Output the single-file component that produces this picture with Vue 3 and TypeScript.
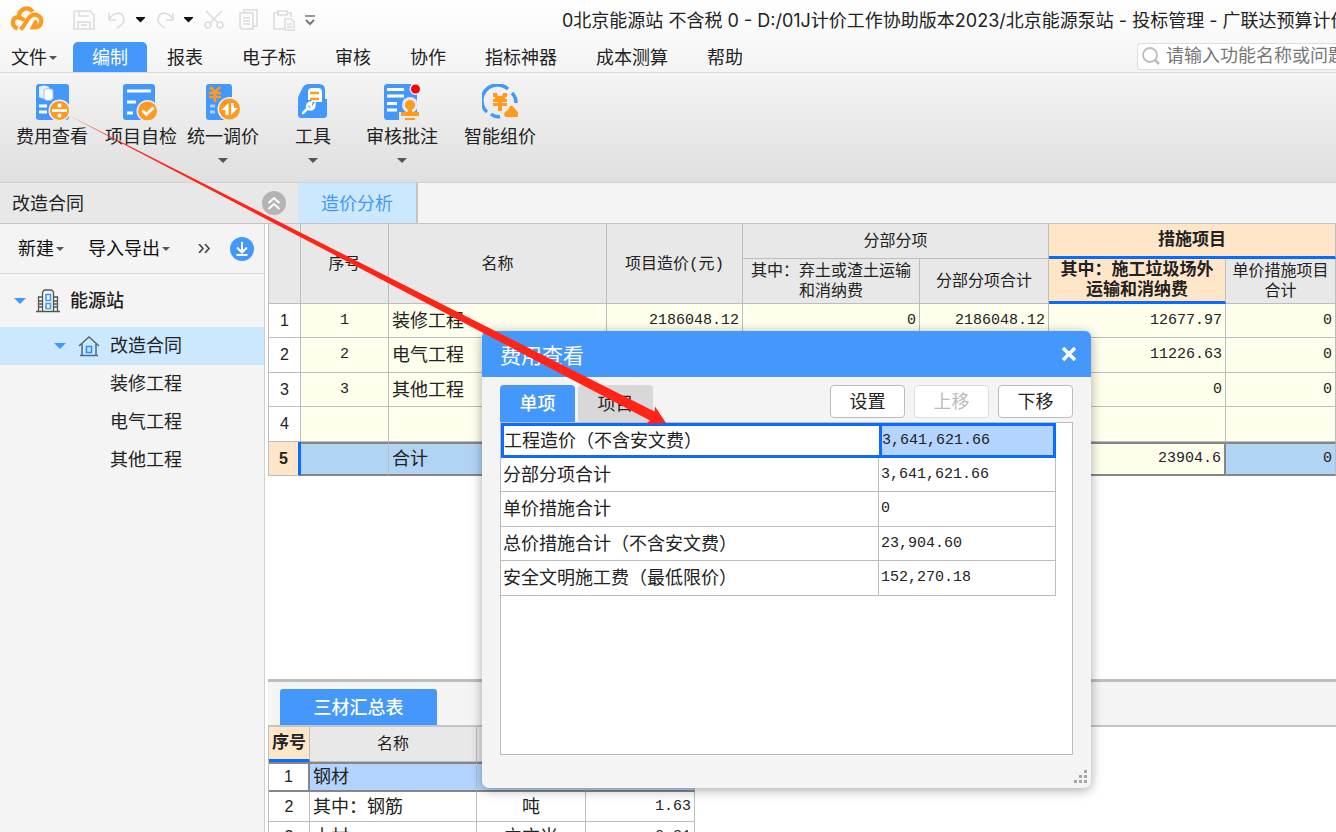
<script setup lang="ts">
import { ref } from 'vue'

interface Tool {
  id: string
  label: string
  menu: boolean
}
interface CostRow {
  no: string
  name: string
  cells: string[]
}

const menus: string[] = ['编制', '报表', '电子标', '审核', '协作', '指标神器', '成本测算', '帮助']
const activeMenu = ref('编制')

const tools: Tool[] = [
  { id: 'fee', label: '费用查看', menu: false },
  { id: 'check', label: '项目自检', menu: false },
  { id: 'adjust', label: '统一调价', menu: true },
  { id: 'tool', label: '工具', menu: true },
  { id: 'review', label: '审核批注', menu: true },
  { id: 'smart', label: '智能组价', menu: false },
]

const leaves: string[] = ['装修工程', '电气工程', '其他工程']

const costRows: CostRow[] = [
  { no: '1', name: '装修工程', cells: ['2186048.12', '0', '2186048.12', '12677.97', '0'] },
  { no: '2', name: '电气工程', cells: ['', '', '', '11226.63', '0'] },
  { no: '3', name: '其他工程', cells: ['', '', '', '0', '0'] },
  { no: '', name: '', cells: ['', '', '', '', ''] },
  { no: '', name: '合计', cells: ['', '', '', '23904.6', '0'] },
]

const materials = [
  { name: '钢材', unit: '', qty: '' },
  { name: '其中：钢筋', unit: '吨', qty: '1.63' },
  { name: '木材', unit: '立方米', qty: '0.31' },
]

const fees = [
  { name: '工程造价（不含安文费）', value: '3,641,621.66' },
  { name: '分部分项合计', value: '3,641,621.66' },
  { name: '单价措施合计', value: '0' },
  { name: '总价措施合计（不含安文费）', value: '23,904.60' },
  { name: '安全文明施工费（最低限价）', value: '152,270.18' },
]
const feeTab = ref('单项')
const selectedFee = ref(0)
const query = ref('')
</script>

<template>
  <div class="app">
    <header class="top">
      <div class="titlebar">
        <svg class="logo" width="34" height="26" viewBox="0 0 34 26" fill="none" stroke="#ff9a1e" stroke-width="4.2" stroke-linecap="butt">
          <path d="M7.6 23.6C1.4 21.4.6 12.8 8.6 11.8 9.4 4 17.4.4 22.6 6.8" />
          <path d="M8 12.600c3 0 4.600 1 6.200 2.800" />
          <path d="M10.600 24.600C14 21 16 16.500 18.800 13c6-7 13.400-1.500 12.400 4.200-.8 4.200-4.200 5.600-8.200 5.200 1.400-2.600 2-4.400 3.800-6.400" />
        </svg>
        <div class="quick">
          <button aria-label="保存"><svg width="22" height="20" viewBox="0 0 22 20" class="ghost"><path d="M2 1h15l4 4v14H1V2zM5 19v-7h12v7M6 1v5h10M8 15h6" /></svg></button>
          <button aria-label="撤销"><svg width="20" height="20" viewBox="0 0 20 20" class="ghost"><path d="M2 3v7h7M2 10C5 3 13 1 16 6c3 6-1 9-6 12" /></svg></button>
          <button aria-label="撤销列表"><svg width="9" height="6" viewBox="0 0 9 6"><path d="M0 0h9v1L4.500 5.500 0 1z" fill="#111" /></svg></button>
          <button aria-label="恢复"><svg width="20" height="20" viewBox="0 0 20 20" class="ghost"><path d="M18 3v7h-7M18 10C15 3 7 1 4 6c-3 6 1 9 6 12" /></svg></button>
          <button aria-label="恢复列表"><svg width="9" height="6" viewBox="0 0 9 6"><path d="M0 0h9v1L4.500 5.500 0 1z" fill="#111" /></svg></button>
          <button aria-label="剪切"><svg width="20" height="20" viewBox="0 0 20 20" class="ghost"><circle cx="4" cy="15" r="3" /><circle cx="16" cy="15" r="3" /><path d="M2 1l12 12M18 1L6 13" /></svg></button>
          <button aria-label="复制"><svg width="20" height="22" viewBox="0 0 20 22" class="ghost"><path d="M5 4V1h13v16h-3M1 4h13v16H3l-2-2zM4 9h7M4 12h7M4 15h7" /></svg></button>
          <button aria-label="粘贴"><svg width="22" height="22" viewBox="0 0 22 22" class="ghost"><path d="M11 20H1V4h4M14 4h4v4M5 2h9v4H5zM12 10h6l3 3v8h-9zM14 15h5M14 18h5" /></svg></button>
          <button aria-label="自定义工具栏"><svg width="10" height="11" viewBox="0 0 10 11" fill="none" stroke="#777"><path d="M0 1h10" stroke-width="1.500" /><path d="M1 5l4 4 4-4" stroke-width="2" /></svg></button>
        </div>
        <h1 class="title">0北京能源站 不含税 0 - D:/01J计价工作协助版本2023/北京能源泵站 - 投标管理 - 广联达预算计价</h1>
      </div>
      <nav class="menubar">
        <button class="file">文件<i class="caret small"></i></button>
        <button v-for="m in menus" :key="m" class="menu" :class="{ on: m === activeMenu }" @click="activeMenu = m">{{ m }}</button>
        <label class="search">
          <svg width="18" height="18" viewBox="0 0 18 18" fill="none" stroke="#bbb" stroke-width="1.800"><circle cx="8" cy="8" r="7" /><path d="M13 13l4 4" stroke-width="2.500" /></svg>
          <input v-model="query" aria-label="搜索" placeholder="请输入功能名称或问题" />
        </label>
      </nav>
    </header>

    <section class="ribbon">
      <button v-for="t in tools" :key="t.id" class="tool">
        <svg v-if="t.id === 'fee'" width="36" height="36" viewBox="0 0 36 36">
          <rect x="2" width="33" height="36" rx="3" fill="#4598fb" />
          <path d="M5 3c4-2 7-2 10 0v10c-3 2-6 2-10 0z" fill="#e5f1ff" />
          <path d="M10 6c3-2 6-2 9 0v9c-3 2-6 2-9 0z" fill="#fff" stroke="#8ec0fb" />
          <path d="M5 22h8M5 28h8" stroke="#fff" stroke-width="3" />
          <circle cx="25.500" cy="26.500" r="11" fill="#e8eef5" /><circle cx="25.500" cy="26.500" r="9.500" fill="#ff9a1e" />
          <path d="M18 26.500h15" stroke="#fff" stroke-width="2.800" /><circle cx="25.500" cy="21.500" r="2" fill="#fff" /><circle cx="25.500" cy="31.500" r="2" fill="#fff" />
        </svg>
        <svg v-else-if="t.id === 'check'" width="36" height="36" viewBox="0 0 36 36">
          <rect x="0" width="32" height="36" rx="3" fill="#4598fb" />
          <path d="M4 7h24M4 18h9M4 29h6" stroke="#fff" stroke-width="3" />
          <circle cx="24.500" cy="27" r="11" fill="#e8eef5" /><circle cx="24.500" cy="27" r="9.500" fill="#ff9a1e" />
          <path d="M19.500 26.500l4 4 7-7" fill="none" stroke="#fff" stroke-width="3" />
        </svg>
        <svg v-else-if="t.id === 'adjust'" width="36" height="36" viewBox="0 0 36 36">
          <rect x="1" width="26" height="36" rx="3" fill="#4598fb" />
          <path d="M5 3l5 5 5-5M4 9h12M4 13h12M10 8v10" fill="none" stroke="#ff9a1e" stroke-width="2.600" />
          <path d="M5 22h5M5 28h5" stroke="#a9d0ff" stroke-width="3" />
          <circle cx="24.500" cy="25" r="12" fill="#e8eef5" /><circle cx="24.500" cy="25" r="10.500" fill="#ff9a1e" />
          <path d="M23.500 19v12h-3v-5h-4zM26 31V19h3v5h4z" fill="#fff" />
        </svg>
        <svg v-else-if="t.id === 'tool'" width="36" height="36" viewBox="0 0 36 36">
          <path d="M3 15q0-2 1-4l4-8q2-3 5-3h11q6 0 6 6v9h2v15q0 4-4 4H7q-4 0-4-4z" fill="#4598fb" />
          <path d="M13 18V8q0-4 4-4h6q4 0 4 4v10z" fill="#fff" /><path d="M15 9h9M15 15h9" stroke="#ff9a1e" stroke-width="2.500" />
          <path d="M18 18h14v12q0 4-4 4H7q-4 0-4-4V16h13z" fill="#4598fb" />
          <path d="M8 29l5-5M12.500 24c-1-3 0-5 4-6l-1 4 2 2 2-3c0 4-3 5-6 4" fill="none" stroke="#fff" stroke-width="2.500" stroke-linecap="round" />
        </svg>
        <svg v-else-if="t.id === 'review'" width="36" height="36" viewBox="0 0 36 36">
          <path d="M2 0h25l6 8v28H2l-2-2V2z" fill="#4598fb" />
          <path d="M3 5.500h17M3 12h17M3 19.500h10M3 26h10" stroke="#fff" stroke-width="2.800" />
          <circle cx="26" cy="21" r="8" fill="#e8e8e8" /><path d="M15 28h20v8H15z" fill="#e8e8e8" />
          <circle cx="26" cy="21" r="5" fill="#ff9a1e" /><path d="M24 24h4v4h7v4H17v-4h7zM21 34h10v2H21z" fill="#ff9a1e" />
          <circle cx="31.500" cy="5" r="6" fill="#e7f1fb" /><circle cx="31.500" cy="5" r="4.500" fill="#f00" />
        </svg>
        <svg v-else width="36" height="36" viewBox="0 0 36 36">
          <path d="M5 28A15 15 0 0 1 26 5M30 9a14 14 0 0 1 4 10M9 30c3 2.500 6 3 9 2.500" fill="none" stroke="#4598fb" stroke-width="3.500" />
          <path d="M11 9h4l1 3h4l1-3h4v4h-2v2h2v3h-5v1h5v3h-5v5h-4v-5h-5v-3h5v-1h-5v-3h2v-2h-2z" fill="#ff9a1e" />
          <path d="M24 33q-3-1-1-5l3-2q3-8 7-1l3 3q2 4-1 5z" fill="#ff9a1e" />
        </svg>
        <span>{{ t.label }}</span>
        <i v-if="t.menu" class="caret"></i>
      </button>
    </section>

    <div class="strip">
      <div class="project">
        <span>改造合同</span>
        <button aria-label="折叠"><svg width="24" height="24" viewBox="0 0 24 24"><circle cx="12" cy="12" r="12" fill="#b4b4b4" /><path d="M6.500 12L12 7l5.500 5M6.500 18l5.500-5 5.500 5" fill="none" stroke="#fff" stroke-width="2" /></svg></button>
      </div>
      <button class="analysis">造价分析</button>
    </div>

    <div class="work">
      <aside class="side">
        <div class="sidebar-tools">
          <button>新建<i class="caret small"></i></button>
          <button>导入导出<i class="caret small"></i></button>
          <button class="more" aria-label="更多"><svg width="13" height="9" viewBox="0 0 13 9" fill="none" stroke="#444" stroke-width="1.600"><path d="M1 0l4 4.500L1 9M7 0l4 4.500L7 9" /></svg></button>
          <button class="down" aria-label="下载"><svg width="24" height="24" viewBox="0 0 24 24"><circle cx="12" cy="12" r="12" fill="#4598fb" /><path d="M12 5v10M7 10.500l5 5 5-5M6.500 18h11" fill="none" stroke="#fff" stroke-width="2" /></svg></button>
        </div>
        <ul class="tree">
          <li class="root">
            <i class="caret blue"></i>
            <svg width="24" height="24" viewBox="0 0 24 24" fill="none" stroke="#555" stroke-width="1.300"><path d="M0 22.500h24M6.500 22V3l2-2h7l2 2v19M6.500 8H2.500v14M17.500 8h4v14M2.500 12h4M2.500 15h4M2.500 18h4M17.500 12h4M17.500 15h4M17.500 18h4" /><path d="M10 5.500h4.500v6H10zM10 14.500h4.500v5H10z" stroke="#4598fb" stroke-width="1.600" /></svg>
            <b>能源站</b>
          </li>
          <li class="branch">
            <i class="caret blue"></i>
            <svg width="22" height="22" viewBox="0 0 22 22" fill="none" stroke="#4b6a86" stroke-width="1.500"><path d="M1 11L11 2l10 9M4 9v11M18 9v11M2 20.500h18" /><path d="M8.500 11.500h5v6h-5z" stroke="#2f8cff" stroke-width="1.600" /></svg>
            <span>改造合同</span>
          </li>
          <li v-for="l in leaves" :key="l" class="leaf">{{ l }}</li>
        </ul>
      </aside>

      <main class="main">
        <div class="upper">
          <table class="grid">
            <colgroup><col class="w32" /><col class="w88" /><col /><col class="w136" /><col class="w177" /><col class="w129" /><col class="w177" /><col class="w110" /></colgroup>
            <thead>
              <tr class="h1">
                <th rowspan="2"></th><th rowspan="2">序号</th><th rowspan="2">名称</th><th rowspan="2">项目造价(元)</th>
                <th colspan="2">分部分项</th><th colspan="2" class="hot">措施项目</th>
              </tr>
              <tr class="h2">
                <th>其中：弃土或渣土运输<br />和消纳费</th><th>分部分项合计</th>
                <th class="hot">其中：施工垃圾场外<br />运输和消纳费</th><th>单价措施项目<br />合计</th>
              </tr>
            </thead>
            <tbody>
              <tr v-for="(r, i) in costRows" :key="i" :class="{ total: i === 4 }">
                <th scope="row">{{ i + 1 }}</th>
                <td class="mid num">{{ r.no }}</td>
                <td class="name">{{ r.name }}</td>
                <td v-for="(c, j) in r.cells" :key="j" class="num" :class="{ plain: j === 3 }">{{ c }}</td>
              </tr>
            </tbody>
          </table>
        </div>
        <section class="lower">
          <div class="tabs"><button>三材汇总表</button></div>
          <table class="grid mats">
            <colgroup><col class="w41" /><col class="w167" /><col class="w109" /><col class="w109" /></colgroup>
            <thead><tr><th class="hot">序号</th><th>名称</th><th>单位</th><th>数量</th></tr></thead>
            <tbody>
              <tr v-for="(m, i) in materials" :key="m.name" :class="{ picked: i === 0 }">
                <th scope="row">{{ i + 1 }}</th><td class="name">{{ m.name }}</td><td class="mid">{{ m.unit }}</td><td class="num">{{ m.qty }}</td>
              </tr>
            </tbody>
          </table>
        </section>
      </main>
    </div>

    <section class="dialog" role="dialog" aria-label="费用查看">
      <header>
        <h2>费用查看</h2>
        <button aria-label="关闭"><svg width="16" height="14" viewBox="0 0 16 14"><path d="M2 1l12 12M14 1L2 13" stroke="#fff" stroke-width="3.500" /></svg></button>
      </header>
      <div class="body">
        <div class="bar">
          <button v-for="t in ['单项', '项目']" :key="t" class="tab" :class="{ on: t === feeTab }" @click="feeTab = t">{{ t }}</button>
          <div class="actions"><button>设置</button><button disabled>上移</button><button>下移</button></div>
        </div>
        <div class="pane">
          <table>
            <colgroup><col /><col class="w177" /></colgroup>
            <tbody>
              <tr v-for="(f, i) in fees" :key="f.name" :class="{ sel: i === selectedFee }" @click="selectedFee = i">
                <td>{{ f.name }}</td><td class="val">{{ f.value }}</td>
              </tr>
            </tbody>
          </table>
        </div>
      </div>
      <svg class="grip" width="13" height="13" viewBox="0 0 13 13" fill="#a6a6a6"><path d="M10 0h3v3h-3zM10 5h3v3h-3zM5 5h3v3H5zM10 10h3v3h-3zM5 10h3v3H5zM0 10h3v3H0z" /></svg>
    </section>

    <svg class="pointer" width="670" height="430" viewBox="0 0 670 430" fill="#ff2318"><path d="M68 115L654.500 411.500l.5-5L666 423l-20 1 4-3.500z" /></svg>
  </div>
</template>

<style>
html,
body {
  margin: 0;
  overflow: hidden;
}
</style>

<style scoped>
.app {
  position: relative;
  display: flex;
  flex-direction: column;
  height: 100vh;
  overflow: hidden;
  background: #fff;
  color: #222;
  font-family: "Liberation Sans", "Noto Sans CJK SC", sans-serif;
  font-size: 18px;
  line-height: 24px;
}
.app * {
  box-sizing: border-box;
}
button {
  margin: 0;
  padding: 0;
  border: 0;
  background: none;
  color: inherit;
  font: inherit;
  white-space: nowrap;
}
svg {
  display: block;
  flex: none;
}
h1,
h2 {
  margin: 0;
  font-size: 18px;
  font-weight: 400;
}
.caret {
  display: block;
  flex: none;
  width: 10px;
  border: 5px solid transparent;
  border-top-color: #555;
  border-bottom: 0;
}
.caret.small {
  width: 8px;
  border-width: 4px 4px 0;
}
.caret.blue {
  width: 12px;
  border-width: 6px 6px 0;
  border-top-color: #4598fb;
}

.top {
  flex: none;
  height: 73px;
  background: linear-gradient(#fff, #f4f4f4);
  border-bottom: 1px solid #d9d9d9;
}
.titlebar {
  display: flex;
  align-items: center;
  height: 40px;
}
.logo {
  margin: 0 22px 4px 10px;
}
.quick {
  display: grid;
  grid-template-columns: 36px 30px 16px 34px 12px 40px 30px 40px 12px;
  place-items: center;
}
.ghost {
  fill: none;
  stroke: #dcdcdc;
  stroke-width: 1.600;
}
.title {
  flex: 1;
  min-width: 0;
  margin-left: 246px;
  padding-top: 2px;
  overflow: hidden;
  font-family: Inter, "Noto Sans CJK SC", sans-serif;
  white-space: nowrap;
}
.menubar {
  display: flex;
  align-items: center;
  height: 32px;
  padding-top: 2px;
  gap: 1px;
}
.file {
  display: flex;
  align-items: center;
  gap: 2px;
  width: 72px;
  padding: 2px 0 0 11px;
}
.menu {
  height: 30px;
  padding: 2px 19px 0;
  border-radius: 5px 5px 0 0;
}
.menu.on {
  background: #4598fb;
  color: #fff;
}
.search {
  display: flex;
  align-items: center;
  gap: 6px;
  width: 199px;
  height: 27px;
  margin: 0 0 2px auto;
  padding-left: 4px;
  border: 1px solid #ddd;
  border-right: 0;
  border-radius: 4px 0 0 4px;
  background: #fff;
}
.search input {
  flex: 1;
  min-width: 0;
  padding: 0;
  border: 0;
  outline: 0;
  background: none;
  font: inherit;
}
.search input::placeholder {
  color: #777;
  opacity: 1;
}

.ribbon {
  display: grid;
  grid-template-columns: 88px 90px 74px 106px 72px 124px;
  flex: none;
  height: 110px;
  padding: 11px 0 0 8px;
  background: linear-gradient(#f4f4f4, #dfdfdf);
  border-bottom: 1px solid #d2d2d2;
}
.tool {
  display: flex;
  flex-direction: column;
  align-items: center;
  gap: 5px;
}
.tool .caret {
  margin-top: 4px;
}

.strip {
  display: flex;
  flex: none;
  height: 41px;
  background: #f4f4f4;
  border-bottom: 1px solid #c4c4c4;
}
.project {
  display: flex;
  align-items: center;
  justify-content: space-between;
  width: 298px;
  padding: 0 12px;
  background: #e8e8e8;
}
.project span,
.analysis {
  padding-top: 2px;
}
.analysis {
  width: 120px;
  background: #cce8ff;
  border-right: 2px solid #c4c4c4;
  color: #4598fb;
}

.work {
  display: flex;
  flex: 1;
  min-height: 0;
}
.side {
  flex: none;
  width: 265px;
  background: #f4f4f4;
  border-right: 1px solid #d0d0d0;
}
.sidebar-tools {
  display: flex;
  align-items: center;
  height: 50px;
  padding-left: 18px;
  border-bottom: 1px solid #d9d9d9;
  color: #111;
}
.sidebar-tools button {
  display: flex;
  align-items: center;
  gap: 2px;
  margin-right: 24px;
}
.sidebar-tools .more {
  margin: 0 19px 0 4px;
}
.sidebar-tools .down {
  margin: 0;
}
.tree {
  margin: 0;
  padding: 0;
  list-style: none;
}
.tree li {
  display: flex;
  align-items: center;
  gap: 10px;
  height: 38px;
}
.tree .root {
  height: 53px;
  padding-left: 14px;
}
.tree .branch {
  padding-left: 54px;
  background: #cce8ff;
}
.tree .branch svg {
  margin-left: 2px;
}
.tree .leaf {
  padding-left: 110px;
}
.tree b {
  font-weight: 500;
}
.main {
  display: flex;
  flex: 1;
  flex-direction: column;
  min-width: 0;
  margin-left: 3px;
}
.upper {
  flex: 1;
  min-height: 0;
}
.grid {
  width: 100%;
  table-layout: fixed;
  border-collapse: separate;
  border-spacing: 0;
  border-left: 1px solid #bdbdbd;
}
.w32 { width: 32px; }
.w41 { width: 41px; }
.w88 { width: 88px; }
.w109 { width: 109px; }
.w110 { width: 110px; }
.w129 { width: 129px; }
.w136 { width: 136px; }
.w167 { width: 167px; }
.w177 { width: 177px; }
.grid th,
.grid td {
  padding: 0 3px;
  border: solid #bdbdbd;
  border-width: 0 1px 1px 0;
  overflow: hidden;
  white-space: nowrap;
}
.grid thead th {
  padding: 2px 0 0;
  background: #e8e8e8;
  font-family: "Liberation Mono", "Noto Sans CJK SC", monospace;
  font-size: 16px;
  font-weight: 400;
  line-height: 20px;
}
.grid thead th.hot {
  background: #ffe6c8;
  border-bottom: 3px solid #0a6cff;
  font-size: 17px;
  font-weight: 700;
}
.h1 { height: 35px; }
.h2 { height: 45px; }
.grid tbody tr { height: 34px; }
.grid tbody tr:nth-child(even) { height: 35px; }
.grid tbody th {
  padding: 0;
  background: #fff;
  font-size: 16px;
  font-weight: 400;
}
.grid td {
  background: #ffffee;
}
.grid td.num {
  text-align: right;
}
.grid td.mid {
  text-align: center;
}
.num,
.val {
  font-family: "Liberation Mono", monospace;
  font-size: 15px;
}
.grid .total td {
  background: #b1d3f4;
  border-top: 2px solid #868686;
  border-bottom: 2px solid #868686;
}
.grid .total td.plain {
  background: #ffffee;
  border-right: 2px solid #868686;
}
.grid .total th {
  background: #ffe6c8;
  border-right: 3px solid #0a6cff;
  font-weight: 700;
}
.lower {
  flex: none;
  height: 153px;
  overflow: hidden;
  border-top: 3px solid #bdbdbd;
}
.tabs {
  display: flex;
  align-items: flex-end;
  height: 45px;
  padding-left: 12px;
  background: #f4f4f4;
  border-bottom: 2px solid #c4c4c4;
}
.tabs button {
  width: 157px;
  height: 36px;
  padding-top: 2px;
  background: #4598fb;
  border-radius: 3px 3px 0 0;
  color: #fff;
  font-weight: 500;
}
.mats {
  width: 427px;
}
.mats thead tr {
  height: 35px;
}
.grid.mats tbody tr {
  height: 30px;
}
.grid.mats td {
  background: #fff;
}
.grid.mats .picked td,
.grid.mats .picked th {
  border-top: 2px solid #868686;
  border-bottom: 2px solid #868686;
}
.grid.mats .picked td {
  background: #b3d4ff;
}
.grid.mats .picked th {
  border-right: 2px solid #868686;
}

.dialog {
  position: absolute;
  top: 331px;
  left: 482px;
  display: flex;
  flex-direction: column;
  width: 609px;
  height: 457px;
  background: #f4f4f4;
  border-radius: 7px;
  box-shadow: 0 2px 12px rgba(0, 0, 0, 0.35);
}
.dialog header {
  display: flex;
  align-items: center;
  justify-content: space-between;
  height: 46px;
  padding: 0 14px 0 18px;
  background: #4598fb;
  border-radius: 6px 6px 0 0;
  color: #fff;
}
.dialog h2 {
  padding-top: 4px;
  font-size: 21px;
}
.body {
  display: flex;
  flex: 1;
  flex-direction: column;
  padding: 8px 18px 33px;
}
.bar {
  display: flex;
  gap: 3px;
  height: 37px;
}
.tab {
  width: 75px;
  background: #d8d8d8;
  border-radius: 4px 4px 0 0;
}
.tab.on {
  background: #4598fb;
  color: #fff;
  font-weight: 500;
}
.actions {
  display: flex;
  gap: 9px;
  margin-left: auto;
}
.actions button {
  width: 75px;
  height: 33px;
  background: #fff;
  border: 1px solid #bbb;
  border-radius: 4px;
}
.actions button:disabled {
  border-color: #ddd;
  color: #bbb;
}
.pane {
  flex: 1;
  background: #fff;
  border: 1px solid #bdbdbd;
}
.pane table {
  width: 100%;
  table-layout: fixed;
  border-collapse: separate;
  border-spacing: 0;
  padding-right: 16px;
}
.pane tr {
  height: 34px;
}
.pane tr:nth-child(odd) {
  height: 35px;
}
.pane td {
  padding: 0 2px;
  border: solid #bdbdbd;
  border-width: 0 1px 1px 0;
  white-space: nowrap;
}
.pane .sel td {
  border: 3px solid #0a6cff;
  border-right-width: 0;
  padding-left: 0;
}
.pane .sel td.val {
  background: #b3d4ff;
  border-right-width: 3px;
}
.grip {
  position: absolute;
  right: 4px;
  bottom: 5px;
}
.pointer {
  position: absolute;
  top: 0;
  left: 0;
  pointer-events: none;
}
</style>
